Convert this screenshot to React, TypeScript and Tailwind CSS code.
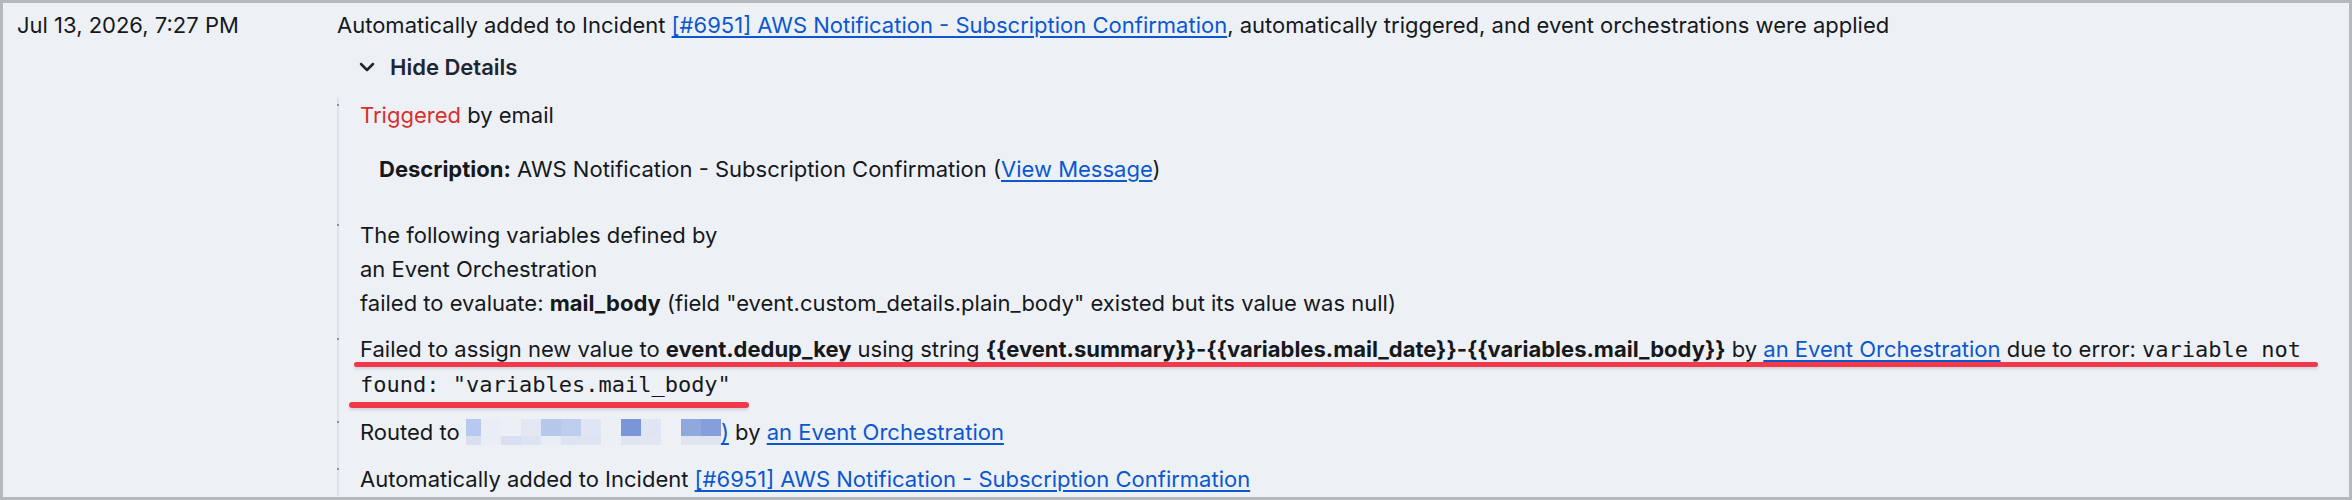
import { ChevronDown } from "lucide-react";

// Pixelated cells hiding the routing target (top row, then bottom row)
const maskTop = [
  "bg-[#b7c9ee]",
  "bg-[#e9edf5]",
  "bg-[#eceff5]",
  "bg-[#e2e7f3]",
  "bg-[#b5c7eb]",
  "bg-[#bccdee]",
  "bg-[#dfe5f2]",
  "bg-[#ecf0f5]",
  "bg-[#7b96d8]",
  "bg-[#dfe5f3]",
  "bg-[#edf0f5]",
  "bg-[#8fa8de]",
  "bg-[#849fdc]",
];
const maskBottom = [
  "bg-[#dadff0]",
  "bg-[#e9edf5]",
  "bg-[#d9dff0]",
  "bg-[#dde3f2]",
  "bg-[#e9edf5]",
  "bg-[#dde3f0]",
  "bg-[#dfe4f1]",
  "bg-[#ecf0f5]",
  "bg-[#dfe4f1]",
  "bg-[#e1e6f2]",
  "bg-[#edf0f5]",
  "bg-[#dfe4f1]",
  "bg-[#dfe4f1]",
];

const linkCls =
  "text-[#0b57d0] underline decoration-[1.5px] underline-offset-[3px]";
const monoCls = "font-[family-name:'DejaVu_Sans_Mono',monospace] text-[22px]";

function Tick() {
  return (
    <span className="absolute -left-[23px] top-[6px] h-[2px] w-[2px] bg-[#8a8f98]" />
  );
}

function Mask() {
  return (
    <span className="inline-block overflow-hidden align-[-5px]">
      <span className="grid grid-cols-[15px_repeat(12,20px)] grid-rows-[17px_9px]">
        {maskTop.map((c, i) => (
          <span key={"t" + i} className={c} />
        ))}
        {maskBottom.map((c, i) => (
          <span key={"b" + i} className={c} />
        ))}
      </span>
    </span>
  );
}

export default function App() {
  return (
    <div className="h-[500px] w-full border-[3px] border-[#b5b8bc] bg-[#edf1f5] font-[family-name:Inter,'Noto_Sans',sans-serif] text-[22px] leading-[34px] text-[#16181c]">
      <div className="grid grid-cols-[320px_1fr] pl-[14px] pr-[14px] pt-[5px]">
        <div>Jul 13, 2026, 7:27 PM</div>

        <div>
          <p>
            Automatically added to Incident{" "}
            <a className={linkCls}>
              [#6951] AWS Notification - Subscription Confirmation
            </a>
            , automatically triggered, and event orchestrations were applied
          </p>

          <button className="mt-[8px] flex items-center pl-[18px] font-semibold text-[#1f2533]">
            <ChevronDown size={24} strokeWidth={2.5} />
            <span className="ml-[11px]">Hide Details</span>
          </button>

          {/* timeline of what happened to the alert */}
          <ul className="mt-[14px] flex flex-col gap-[12px] border-l-2 border-[#dde2e9] pl-[21px]">
            <li className="relative">
              <Tick />
              <p>
                <span className="text-[#d92f2c]">Triggered</span> by email
              </p>
              <p className="my-[20px] pl-[19px]">
                <span className="font-bold">Description:</span> AWS
                Notification - Subscription Confirmation (
                <a className={linkCls}>View Message</a>)
              </p>
            </li>

            <li className="relative">
              <Tick />
              <p>The following variables defined by</p>
              <p>an Event Orchestration</p>
              <p>
                failed to evaluate: <span className="font-bold">mail_body</span>{" "}
                (field "event.custom_details.plain_body" existed but its value
                was null)
              </p>
            </li>

            <li className="relative pr-[10px]">
              <Tick />
              <p>
                Failed to assign new value to{" "}
                <span className="font-bold">event.dedup_key</span> using string{" "}
                <span className="font-bold">
                  {"{{event.summary}}-{{variables.mail_date}}-{{variables.mail_body}}"}
                </span>{" "}
                by <a className={linkCls}>an Event Orchestration</a> due to
                error:{" "}
                <code className={monoCls}>
                  variable not found: "variables.mail_body"
                </code>
              </p>
              {/* red marker strokes under the error */}
              <span className="absolute -left-[6px] top-[30px] h-[5px] w-[1964px] rounded-full bg-[#f2394c] shadow-[0_2px_3px_rgba(0,0,0,0.12)]" />
              <span className="absolute -left-[11px] top-[70px] h-[6px] w-[400px] rounded-full bg-[#f2394c] shadow-[0_2px_3px_rgba(0,0,0,0.12)]" />
            </li>

            <li className="relative mt-[1px]">
              <Tick />
              <p>
                Routed to <Mask />
                <a className={linkCls}>)</a> by{" "}
                <a className={linkCls}>an Event Orchestration</a>
              </p>
            </li>

            <li className="relative mt-[1px]">
              <Tick />
              <p>
                Automatically added to Incident{" "}
                <a className={linkCls}>
                  [#6951] AWS Notification - Subscription Confirmation
                </a>
              </p>
            </li>
          </ul>
        </div>
      </div>
    </div>
  );
}
